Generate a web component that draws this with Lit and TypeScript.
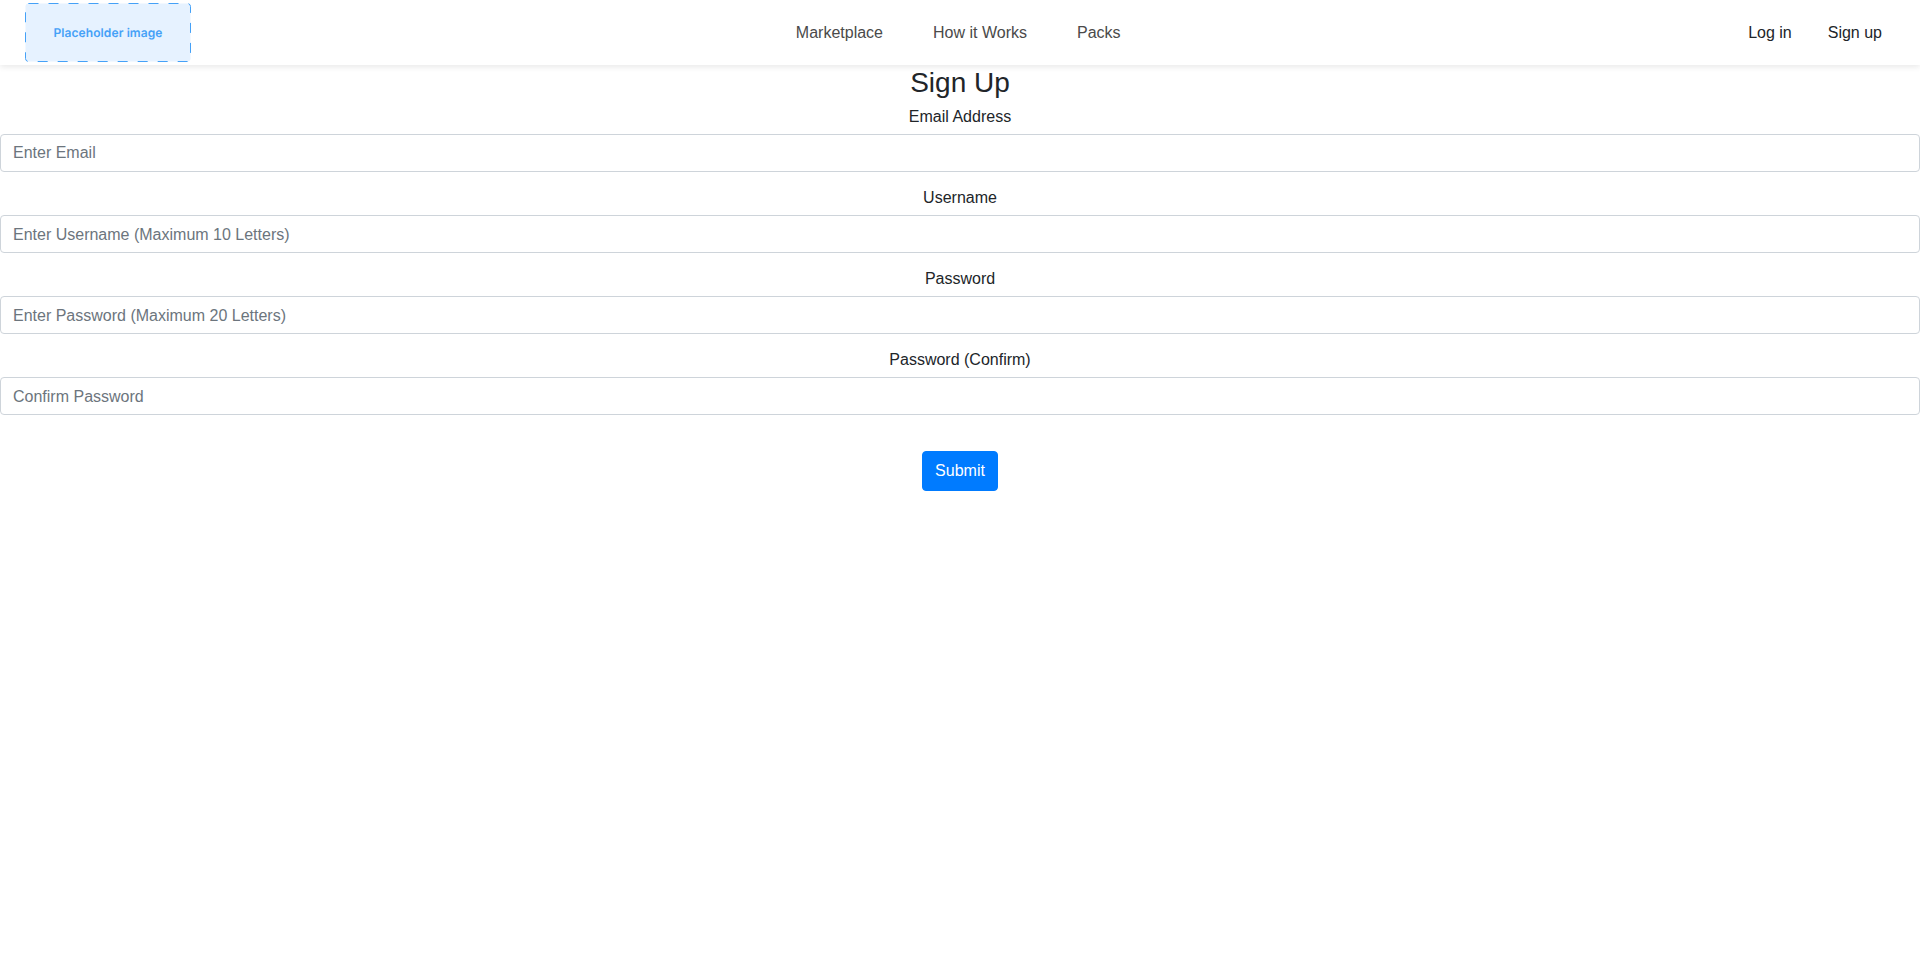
import { LitElement, html, css, svg } from "lit";
import { customElement } from "lit/decorators.js";

const base = css`
  *, *::before, *::after { box-sizing: border-box; }
  a { color: inherit; text-decoration: none; }
`;

@customElement("site-header")
class SiteHeader extends LitElement {
  static styles = [base, css`
    :host { display: block; position: relative; }
    .bar {
      display: grid;
      grid-template-columns: 1fr auto 1fr;
      align-items: center;
      height: 65px;
      padding: 0 38px 0 25px;
      background: #fff;
      box-shadow: 0 2px 6px rgba(0, 0, 0, 0.09);
      line-height: 24px;
    }
    .logo { display: block; width: 166px; height: 59px; }
    .logo-text {
      font: 600 12px Inter, sans-serif;
      letter-spacing: 0.1px;
      text-rendering: geometricPrecision;
      fill: #45a1f7;
    }
    .links { display: flex; gap: 50px; color: #4a4a4a; padding-left: 9.4px; }
    .account { display: flex; justify-content: flex-end; gap: 36px; color: #212529; }
  `];

  render() {
    return html`
      <nav class="bar">
        <a href="#"><svg class="logo" viewBox="0 0 166 59">${svg`
          <rect x="0.5" y="0.5" width="165" height="58" rx="3" fill="#e6f2ff" stroke="#45a1f7" stroke-dasharray="10 10"/>
          <text class="logo-text" x="83" y="34" text-anchor="middle">Placeholder image</text>`}
        </svg></a>
        <div class="links">
          <a href="#">Marketplace</a><a href="#">How it Works</a><a href="#">Packs</a>
        </div>
        <div class="account"><a href="#">Log in</a><a href="#">Sign up</a></div>
      </nav>`;
  }
}

@customElement("app-root")
class AppRoot extends LitElement {
  static styles = [base, css`
    :host {
      display: block;
      min-height: 100vh;
      background: #fff;
      color: #212529;
      font: 16px/normal "Liberation Sans", Arial, sans-serif;
    }
    .form { text-align: center; }
    .title { margin: 0 0 6px; font-size: 28px; font-weight: 500; line-height: 36px; }
    .group { margin-bottom: 16px; }
    .label { display: block; height: 19px; line-height: 19px; margin-bottom: 8px; }
    .input {
      display: block;
      width: 100%;
      height: 38px;
      padding: 6px 12px;
      border: 1px solid #ced4da;
      border-radius: 4px;
      background: #fff;
      color: #495057;
      font: inherit;
      line-height: 24px;
    }
    .group + .group .input { padding: 7px 12px 5px; }
    .input::placeholder { color: #6c757d; opacity: 1; }
    .submit {
      height: 40px;
      margin-top: 20px;
      padding: 6px 12px;
      border: 1px solid #007bff;
      border-radius: 4px;
      background: #007bff;
      color: #fff;
      font: inherit;
      line-height: 24px;
    }
  `];

  fields = [
    { id: "email", label: "Email Address", type: "email", hint: "Enter Email" },
    { id: "username", label: "Username", type: "text", hint: "Enter Username (Maximum 10 Letters)" },
    { id: "password", label: "Password", type: "password", hint: "Enter Password (Maximum 20 Letters)" },
    { id: "confirm", label: "Password (Confirm)", type: "password", hint: "Confirm Password" },
  ];

  render() {
    return html`
      <site-header></site-header>
      <form class="form" @submit=${(e: Event) => e.preventDefault()}>
        <h3 class="title">Sign Up</h3>
        ${this.fields.map((f) => html`
          <div class="group">
            <label class="label" for=${f.id}>${f.label}</label>
            <input class="input" id=${f.id} type=${f.type} placeholder=${f.hint} />
          </div>`)}
        <button class="submit" type="submit">Submit</button>
      </form>`;
  }
}
